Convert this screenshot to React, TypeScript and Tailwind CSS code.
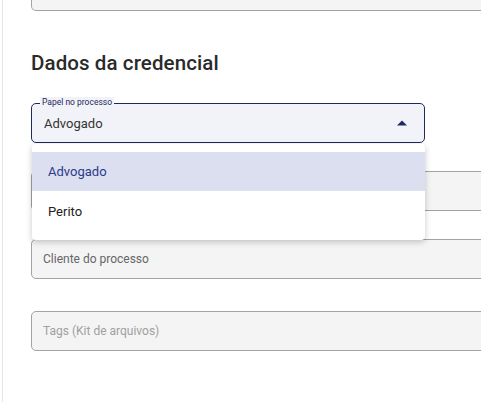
export default function App() {
  const field = "h-[40px] w-[480px] rounded-[5px] border border-[#a3a3a3] bg-[#f4f4f4] flex items-center px-[11px] text-[12px]";
  return (
    <div className="w-[481px] h-[402px] overflow-hidden bg-white font-['Roboto',sans-serif]">
      <div className="ml-[2px] h-full border-l border-[#e6e6e6] pl-[28px] relative">
        <div className="h-[11px] w-[480px] rounded-b-[5px] border-x border-b border-[#a3a3a3] bg-[#f4f4f4]" />

        <h2 className="mt-[38px] h-[28px] text-[20.5px] leading-[28px] font-medium text-[#2a2a2a] tracking-[0.1px]">
          Dados da credencial
        </h2>

        <div className="relative mt-[26px] w-[394px] h-[40px]">
          <div className="h-full rounded-[5px] border border-[#1e2a5a] bg-[#f2f3f8] flex items-center justify-between pl-[12px] pr-[17px]">
            <span className="text-[13px] text-[#333] pt-[1px]">Advogado</span>
            <svg width="10" height="6" viewBox="0 0 10 5">
              <path d="M0 5 L5 0 L10 5 Z" fill="#1e2a5a" />
            </svg>
          </div>
          <span className="absolute left-[9px] top-[-6px] bg-[#f2f3f8] px-[2px] text-[8.5px] leading-[10px] text-[#1e2a5a]">
            Papel no processo
          </span>
        </div>

        <div className={`${field} mt-[28px]`} />
        <div className={`${field} mt-[28px] text-[#666]`}>Cliente do processo</div>
        <div className={`${field} mt-[32px] text-[#a0a0a0]`}>Tags (Kit de arquivos)</div>

        <div className="absolute left-[29px] top-[144px] w-[393px] h-[96px] rounded-[4px] bg-white shadow-[0_2px_6px_rgba(0,0,0,0.22)] py-[8px]">
          <div className="h-[39px] bg-[#dcdfef] flex items-center pl-[16px] text-[13px] text-[#2b3a8c]">Advogado</div>
          <div className="h-[41px] flex items-center pl-[16px] text-[13px] text-[#222]">Perito</div>
        </div>
      </div>
    </div>
  );
}
